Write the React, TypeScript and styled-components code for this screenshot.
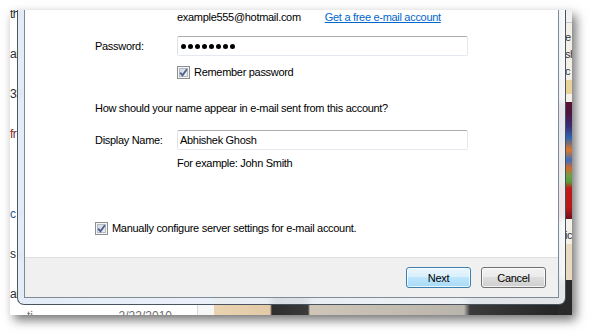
import styled, { createGlobalStyle } from "styled-components";

const GlobalStyle = createGlobalStyle`
  html, body {
    margin: 0;
    padding: 0;
    background: #fff;
  }
  body {
    font-family: "Liberation Sans", Arial, sans-serif;
  }
`;

const Page = styled.div`
  width: 589px;
  height: 333px;
  box-sizing: border-box;
  padding: 10px 0 0 10px;
  overflow: hidden;
`;

// the screenshot itself: background window and dialog share one grid cell
const Shot = styled.div`
  width: 562px;
  height: 305px;
  display: grid;
  grid-template-rows: 305px;
  grid-template-columns: 562px;
  overflow: hidden;
  background: #fff;
  box-shadow: 4px 5px 10px rgba(0, 0, 0, 0.55);

  & > * {
    grid-area: 1 / 1;
    min-height: 0;
  }
`;

/* ---------- window behind the dialog ---------- */

const BackWindow = styled.div`
  display: grid;
  grid-template-columns: 187px 17px 1fr;
  overflow: hidden;
  font-size: 12px;
  color: #2b2b2b;
`;

const ListPane = styled.div`
  display: flex;
  flex-direction: column;
  overflow: hidden;
  background: #fff;
`;

const ListItem = styled.div`
  height: 40px;
  flex-shrink: 0;
  display: flex;
  flex-direction: column;
`;

// only the tail of each title peeks out left of the dialog frame
const ListTitle = styled.div<{ $color?: string }>`
  margin-top: -3px;
  white-space: nowrap;
  line-height: 14px;
  letter-spacing: -0.5px;
  color: ${(p) => p.$color || "#2b2b2b"};
`;

const ListMeta = styled.div`
  display: flex;
  justify-content: space-between;
  margin-top: 8px;
  padding: 0 25px 0 17px;
  line-height: 14px;
  color: #6d6d6d;
`;

const Gutter = styled.div`
  background: #f7f7f7;
  border-left: 1px solid #d9d9d9;
`;

const Viewer = styled.div`
  display: flex;
`;

const Photo = styled.div`
  flex: 1;
  background: linear-gradient(
    90deg,
    #ead3b1 0,
    #e2caa8 56px,
    #2e2e2e 58px,
    #3a3a3a 94px,
    #cfc6b8 96px,
    #b9b4ac 250px,
    #3b3b3b 256px,
    #262626 100%
  );
`;

const SidePanel = styled.div`
  width: 14px;
  display: flex;
  flex-direction: column;
  overflow: hidden;
  background: #f3efe6;
`;

const SideHeader = styled.div`
  height: 12px;
  flex-shrink: 0;
  background: #f0f0f0;
  border-bottom: 1px solid #c9c9c9;
`;

const SideText = styled.div`
  padding-left: 7px;
  white-space: nowrap;
  line-height: 17px;
  font-size: 11px;
  letter-spacing: -0.5px;
  color: #333;
`;

const SideBand = styled.div<{ $h: number; $bg: string }>`
  height: ${(p) => p.$h}px;
  flex-shrink: 0;
  background: ${(p) => p.$bg};
`;

const Thumb = styled.div`
  height: 117px;
  flex-shrink: 0;
  background: linear-gradient(
    180deg,
    #5b1232 0,
    #4a1640 12px,
    #3a2c72 24px,
    #2f66b0 36px,
    #e0772a 48px,
    #3c6ec0 58px,
    #d46a2a 66px,
    #6aa048 74px,
    #5c9a3a 80px,
    #c21a1a 86px,
    #b81818 106px,
    #6a1020 117px
  );
`;

/* ---------- the dialog ---------- */

const Dialog = styled.div`
  margin: 0 6px 10px 7px;
  display: flex;
  padding: 0 6px 6px;
  border: 1px solid rgba(35, 45, 58, 0.8);
  border-top: none;
  border-radius: 0 0 7px 7px;
  background: linear-gradient(90deg, rgba(224, 234, 246, 0.9), rgba(248, 250, 253, 0.9));
  backdrop-filter: blur(3px);
  font-size: 11px;
  letter-spacing: -0.3px;
  color: #000;
`;

const Client = styled.div`
  flex: 1;
  display: flex;
  flex-direction: column;
  background: #fff;
  border: 1px solid #7f8a97;
  border-top: none;
`;

const Content = styled.div`
  flex: 1;
  display: flex;
  flex-direction: column;
  padding-left: 70px;
`;

const FieldRow = styled.div<{ $top: number }>`
  display: grid;
  grid-template-columns: 82px 291px;
  align-items: center;
  margin-top: ${(p) => p.$top}px;
  line-height: 14px;
`;

const Line = styled.div<{ $top: number; $indent?: number }>`
  margin-top: ${(p) => p.$top}px;
  padding-left: ${(p) => p.$indent || 0}px;
  line-height: 14px;
`;

const Inline = styled.div`
  display: flex;
  gap: 24px;
`;

const Link = styled.a`
  color: #0066cc;
  text-decoration: underline;
  cursor: pointer;
`;

const TextBox = styled.div`
  height: 20px;
  box-sizing: border-box;
  display: flex;
  align-items: center;
  padding-left: 2px;
  border: 1px solid;
  border-color: #abadb3 #e3e9ef #e3e9ef #e2e3ea;
  border-radius: 2px;
  background: #fff;
`;

const Dots = styled.div`
  display: flex;
  gap: 2px;
  padding-left: 1px;
`;

const Dot = styled.span`
  width: 5px;
  height: 5px;
  border-radius: 50%;
  background: #000;
`;

const CheckRow = styled.label`
  display: flex;
  align-items: center;
  gap: 4px;
  line-height: 13px;
  height: 13px;
`;

const CheckBox = styled.span`
  width: 13px;
  height: 13px;
  box-sizing: border-box;
  border: 1px solid #8e8f8f;
  background: linear-gradient(135deg, #cdd2da, #f3f4f6);
  box-shadow: inset 0 0 0 1px #f4f4f4, inset 0 0 0 2px #b6bcc5;
  display: flex;
  flex-shrink: 0;
`;

const Footer = styled.div`
  height: 40px;
  box-sizing: border-box;
  display: flex;
  justify-content: flex-end;
  align-items: center;
  gap: 10px;
  padding-right: 12px;
  border-top: 1px solid #dfdfdf;
  background: #f0f0f0;
`;

const Button = styled.button<{ $default?: boolean }>`
  width: 65px;
  height: 21px;
  padding: 0;
  font: inherit;
  letter-spacing: inherit;
  color: #000;
  border-radius: 3px;
  border: 1px solid ${(p) => (p.$default ? "#3c7fb1" : "#707070")};
  box-shadow: inset 0 0 0 1px rgba(255, 255, 255, 0.75);
  background: ${(p) =>
    p.$default
      ? "linear-gradient(180deg, #eaf6fd 0%, #d9f0fc 45%, #bee6fd 50%, #a7d9f5 100%)"
      : "linear-gradient(180deg, #f2f2f2 0%, #ebebeb 45%, #dddddd 50%, #cfcfcf 100%)"};
  cursor: pointer;
`;

function Check() {
  return (
    <CheckBox>
      <svg width="11" height="11" viewBox="0 0 11 11">
        <path d="M2.2 5.6 L4.5 8.3 L8.9 2.3" fill="none" stroke="#4b5e8e" strokeWidth="1.8" />
      </svg>
    </CheckBox>
  );
}

const titles: { text: string; color?: string }[] = [
  { text: "th" },
  { text: "ar" },
  { text: "33" },
  { text: "fr", color: "#7a2c2c" },
  { text: "" },
  { text: "c n", color: "#2a4f8f" },
  { text: "s c" },
];

export default function App() {
  return (
    <>
      <GlobalStyle />
      <Page>
        <Shot>
          <BackWindow>
            <ListPane>
              {titles.map((t, i) => (
                <ListItem key={i}>
                  <ListTitle $color={t.color}>{t.text || "\u00a0"}</ListTitle>
                </ListItem>
              ))}
              <ListItem>
                <ListTitle>ar</ListTitle>
                <ListMeta>
                  <span>ti</span>
                  <span>2/22/2010</span>
                </ListMeta>
              </ListItem>
            </ListPane>
            <Gutter />
            <Viewer>
              <Photo />
              <SidePanel>
                <SideHeader />
                <SideBand $h={6} $bg="#f3efe6" />
                <SideText>e</SideText>
                <SideText>sh</SideText>
                <SideText>c</SideText>
                <SideBand $h={14} $bg="#e8d49a" />
                <SideBand $h={8} $bg="#f4f1ea" />
                <Thumb />
                <SideBand $h={8} $bg="#f4f1ea" />
                <SideText>ic</SideText>
                <SideBand $h={36} $bg="#e8d9c0" />
                <SideBand $h={40} $bg="#2a2a2a" />
              </SidePanel>
            </Viewer>
          </BackWindow>

          <Dialog>
            <Client>
              <Content>
                <FieldRow $top={0}>
                  <span />
                  <Inline>
                    <span>example555@hotmail.com</span>
                    <Link>Get a free e-mail account</Link>
                  </Inline>
                </FieldRow>

                <FieldRow $top={12}>
                  <span>Password:</span>
                  <TextBox>
                    <Dots>
                      {Array.from({ length: 8 }).map((_, i) => (
                        <Dot key={i} />
                      ))}
                    </Dots>
                  </TextBox>
                </FieldRow>

                <FieldRow $top={10}>
                  <span />
                  <CheckRow>
                    <Check />
                    Remember password
                  </CheckRow>
                </FieldRow>

                <Line $top={22}>How should your name appear in e-mail sent from this account?</Line>

                <FieldRow $top={15}>
                  <span>Display Name:</span>
                  <TextBox>Abhishek Ghosh</TextBox>
                </FieldRow>

                <Line $top={6} $indent={82}>
                  For example: John Smith
                </Line>

                <Line $top={52}>
                  <CheckRow>
                    <Check />
                    Manually configure server settings for e-mail account.
                  </CheckRow>
                </Line>
              </Content>

              <Footer>
                <Button $default>Next</Button>
                <Button>Cancel</Button>
              </Footer>
            </Client>
          </Dialog>
        </Shot>
      </Page>
    </>
  );
}
